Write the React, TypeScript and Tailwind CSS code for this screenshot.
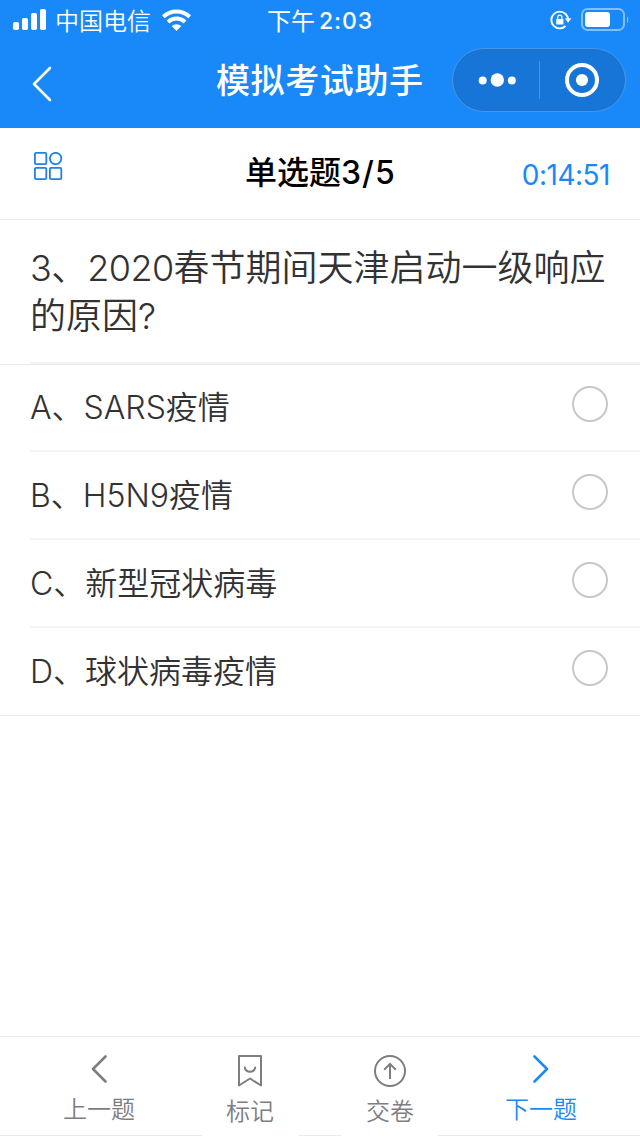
const options = [
  { key: "A", latin: "SARS", text: "疫情" },
  { key: "B", latin: "H5N9", text: "疫情" },
  { key: "C", latin: "", text: "新型冠状病毒" },
  { key: "D", latin: "", text: "球状病毒疫情" },
];

function StatusBar() {
  return (
    <div className="flex h-10 items-center pl-[13px] pr-[11px]">
      <svg className="-mt-px h-[21px] w-[34px]" viewBox="0 0 34 21" fill="currentColor">
        <rect x="0" y="13" width="6" height="8" rx="1.8" />
        <rect x="9" y="9" width="6" height="12" rx="1.8" />
        <rect x="18" y="4" width="6" height="17" rx="1.8" />
        <rect x="27" y="0" width="6" height="21" rx="1.8" />
      </svg>
      <span className="ml-[8px] mt-[3px] w-[96px] whitespace-nowrap text-[24px] font-[350] leading-10">
        中国电信
      </span>
      <svg className="ml-[11px] h-[22px] w-[29px]" viewBox="0 0 29 22">
        <g fill="none" stroke="currentColor" strokeWidth="4">
          <path d="M1.3 7.8a18.8 18.8 0 0 1 26.4 0" />
          <path d="M6 13a12 12 0 0 1 17 0" />
        </g>
        <path d="M14.5 22l-4.8-4.9a6.9 6.9 0 0 1 9.6 0z" fill="currentColor" />
      </svg>
      <span className="ml-[76px] mt-[3px] whitespace-nowrap text-[24px] font-normal leading-10">
        下午
      </span>
      <span className="ml-[4px] mt-[2px] whitespace-nowrap text-[23px] font-medium leading-10 tracking-[0.9px]">
        2:03
      </span>
      <svg className="ml-auto h-[20px] w-[22px]" viewBox="0 0 22 20">
        <path
          d="M15.6 4A8.4 8.4 0 1 0 15.6 16M15.6 4a8.4 8.4 0 0 1 2.5 5"
          fill="none"
          stroke="currentColor"
          strokeWidth="1.9"
        />
        <path d="M14.8 8.3h6.6l-3.3 4.5z" fill="currentColor" />
        <rect x="6.2" y="9" width="7.2" height="5.4" rx="0.6" fill="currentColor" />
        <path d="M7.7 9V7.2a2.1 2.1 0 0 1 4.2 0V9" fill="none" stroke="currentColor" strokeWidth="1.3" />
      </svg>
      <svg className="ml-[9px] h-[24px] w-[48px]" viewBox="0 0 48 24">
        <rect x="1" y="1" width="42" height="21" rx="5.5" fill="none" stroke="#83bffc" strokeWidth="2" />
        <rect x="4" y="4" width="25" height="15" rx="3" fill="currentColor" />
        <path d="M46 8.5v6.5c1.8-.8 1.8-5.7 0-6.5z" fill="#83bffc" />
      </svg>
    </div>
  );
}

function NavBar() {
  return (
    <div className="flex h-[88px] items-center pl-[32px] pr-[14px]">
      <svg className="h-[36px] w-[20px]" viewBox="0 0 20 36" fill="none" stroke="currentColor">
        <path d="M18 2L2 18l16 16" strokeWidth="2.6" strokeLinecap="round" strokeLinejoin="round" />
      </svg>
      <h1 className="mb-[6px] ml-[164px] w-[236px] whitespace-nowrap text-[34px] font-medium leading-[48px] tracking-[0.6px]">
        模拟考试助手
      </h1>
      <div className="mb-[8px] flex h-[64px] w-[174px] items-center rounded-full border border-[#4a96e4] bg-[#1675d6]">
        <svg className="h-[14px] w-[86px]" viewBox="0 0 86 14" fill="currentColor">
          <circle cx="29.7" cy="7.5" r="4" />
          <circle cx="44.3" cy="7" r="6.7" />
          <circle cx="58.8" cy="7.5" r="4" />
        </svg>
        <div className="h-[38px] w-px bg-[#4a93e0]" />
        <svg className="h-[36px] w-[84px]" viewBox="0 0 84 36">
          <circle cx="42" cy="18" r="15" fill="none" stroke="currentColor" strokeWidth="4" />
          <circle cx="42" cy="18" r="6.1" fill="currentColor" />
        </svg>
      </div>
    </div>
  );
}

function QuestionHeader() {
  return (
    <div className="flex h-[92px] items-center border-b border-[#ebebeb] pl-[34px] pr-[30px]">
      <svg
        className="mb-[15px] h-[28px] w-[29px]"
        viewBox="0 0 29 28"
        fill="none"
        stroke="#1e82e6"
        strokeWidth="1.8"
      >
        <rect x="0.9" y="0.9" width="11.4" height="11.2" rx="1.2" />
        <circle cx="21.6" cy="6.5" r="5.7" />
        <rect x="0.9" y="15.9" width="11.4" height="11.2" rx="1.2" />
        <rect x="15.9" y="15.9" width="11.4" height="11.2" rx="1.2" />
      </svg>
      <h2 className="mb-[2px] ml-[182px] whitespace-nowrap text-[32px] font-medium leading-[48px] text-black">
        单选题<span className="tracking-[1px]">3/5</span>
      </h2>
      <span className="ml-auto mt-[2px] text-[28px] leading-10 tracking-[-0.5px] text-[#1989fa]">
        0:14:51
      </span>
    </div>
  );
}

function BottomBar() {
  return (
    <nav className="flex h-[100px] justify-between border-y border-[#ebebeb] text-[24px] font-[350] leading-[34px] text-[#7d7e80]">
      <button className="flex w-[198px] flex-col items-center pt-[18px]">
        <svg className="h-[28px] w-[16px]" viewBox="0 0 16 28" fill="none" stroke="currentColor">
          <path d="M14.5 1.5L2 14l12.5 12.5" strokeWidth="2.6" strokeLinecap="round" strokeLinejoin="round" />
        </svg>
        <span className="mt-[10px]">上一题</span>
      </button>
      <div className="-mb-px flex gap-[44px]">
        <button className="flex w-[96px] flex-col items-center bg-white pt-[18px]">
          <svg className="h-[32px] w-[24px]" viewBox="0 0 24 32" fill="none" stroke="currentColor" strokeWidth="2" strokeLinejoin="round">
            <path d="M1 1h22v29.5l-11-7-11 7z" />
            <path d="M6.8 12.5a5.3 5.3 0 0 0 10.4 0" strokeLinecap="round" />
          </svg>
          <span className="mt-[8px]">标记</span>
        </button>
        <button className="flex w-[96px] flex-col items-center bg-white pt-[18px]">
          <svg className="h-[32px] w-[32px]" viewBox="0 0 32 32" fill="none" stroke="currentColor" strokeWidth="2">
            <circle cx="16" cy="16" r="15" />
            <path d="M16 24V9M10.2 14.7L16 8.9l5.8 5.8" />
          </svg>
          <span className="mt-[8px]">交卷</span>
        </button>
      </div>
      <button className="flex w-[198px] flex-col items-center pt-[18px] text-[#1989fa]">
        <svg className="h-[28px] w-[16px]" viewBox="0 0 16 28" fill="none" stroke="currentColor">
          <path d="M1.5 1.5L14 14 1.5 26.5" strokeWidth="2.6" strokeLinecap="round" strokeLinejoin="round" />
        </svg>
        <span className="mt-[10px]">下一题</span>
      </button>
    </nav>
  );
}

export default function App() {
  return (
    <div className="flex h-[1136px] w-[640px] flex-col overflow-hidden bg-white font-['Inter','Noto_Sans_CJK_SC',sans-serif]">
      <header className="bg-[#1989fa] text-white">
        <StatusBar />
        <NavBar />
      </header>

      <QuestionHeader />

      {/* Question */}
      <div className="flex h-[142px] flex-col pl-[30px] pt-[24px] text-[36px] font-[350] leading-[48px] text-[#323233]">
        <p className="whitespace-nowrap">
          <span className="tracking-[-0.5px]">3</span>、
          <span className="tracking-[-0.6px]">2020</span>春节期间天津启动一级响应
        </p>
        <p>的原因?</p>
      </div>

      {/* Options */}
      <div className="border-b border-[#ebebeb]">
        <div className="ml-[30px] h-[2px] bg-[#f3f3f3]" />
        <div className="h-px bg-[#ebebeb]" />
        {options.map((option, index) => (
          <div key={option.key} className="ml-[30px]">
            {index > 0 && <div className="h-[2px] bg-[#f4f4f4]" />}
            <div
              className={`flex items-start justify-between pr-[32px] text-[32px] font-[350] leading-[48px] text-[#323233] ${
                index === 0 ? "h-[85px] pt-[19px]" : index === 3 ? "h-[87px] pt-[20px]" : "h-[86px] pt-[20px]"
              }`}
            >
              <span className="whitespace-nowrap">
                {option.key}、{option.latin}
                {option.text}
              </span>
              <span className="mt-[2px] h-[36px] w-[36px] rounded-full border-2 border-[#c8c8c8]" />
            </div>
          </div>
        ))}
      </div>

      <div className="flex-1" />
      <BottomBar />
    </div>
  );
}
